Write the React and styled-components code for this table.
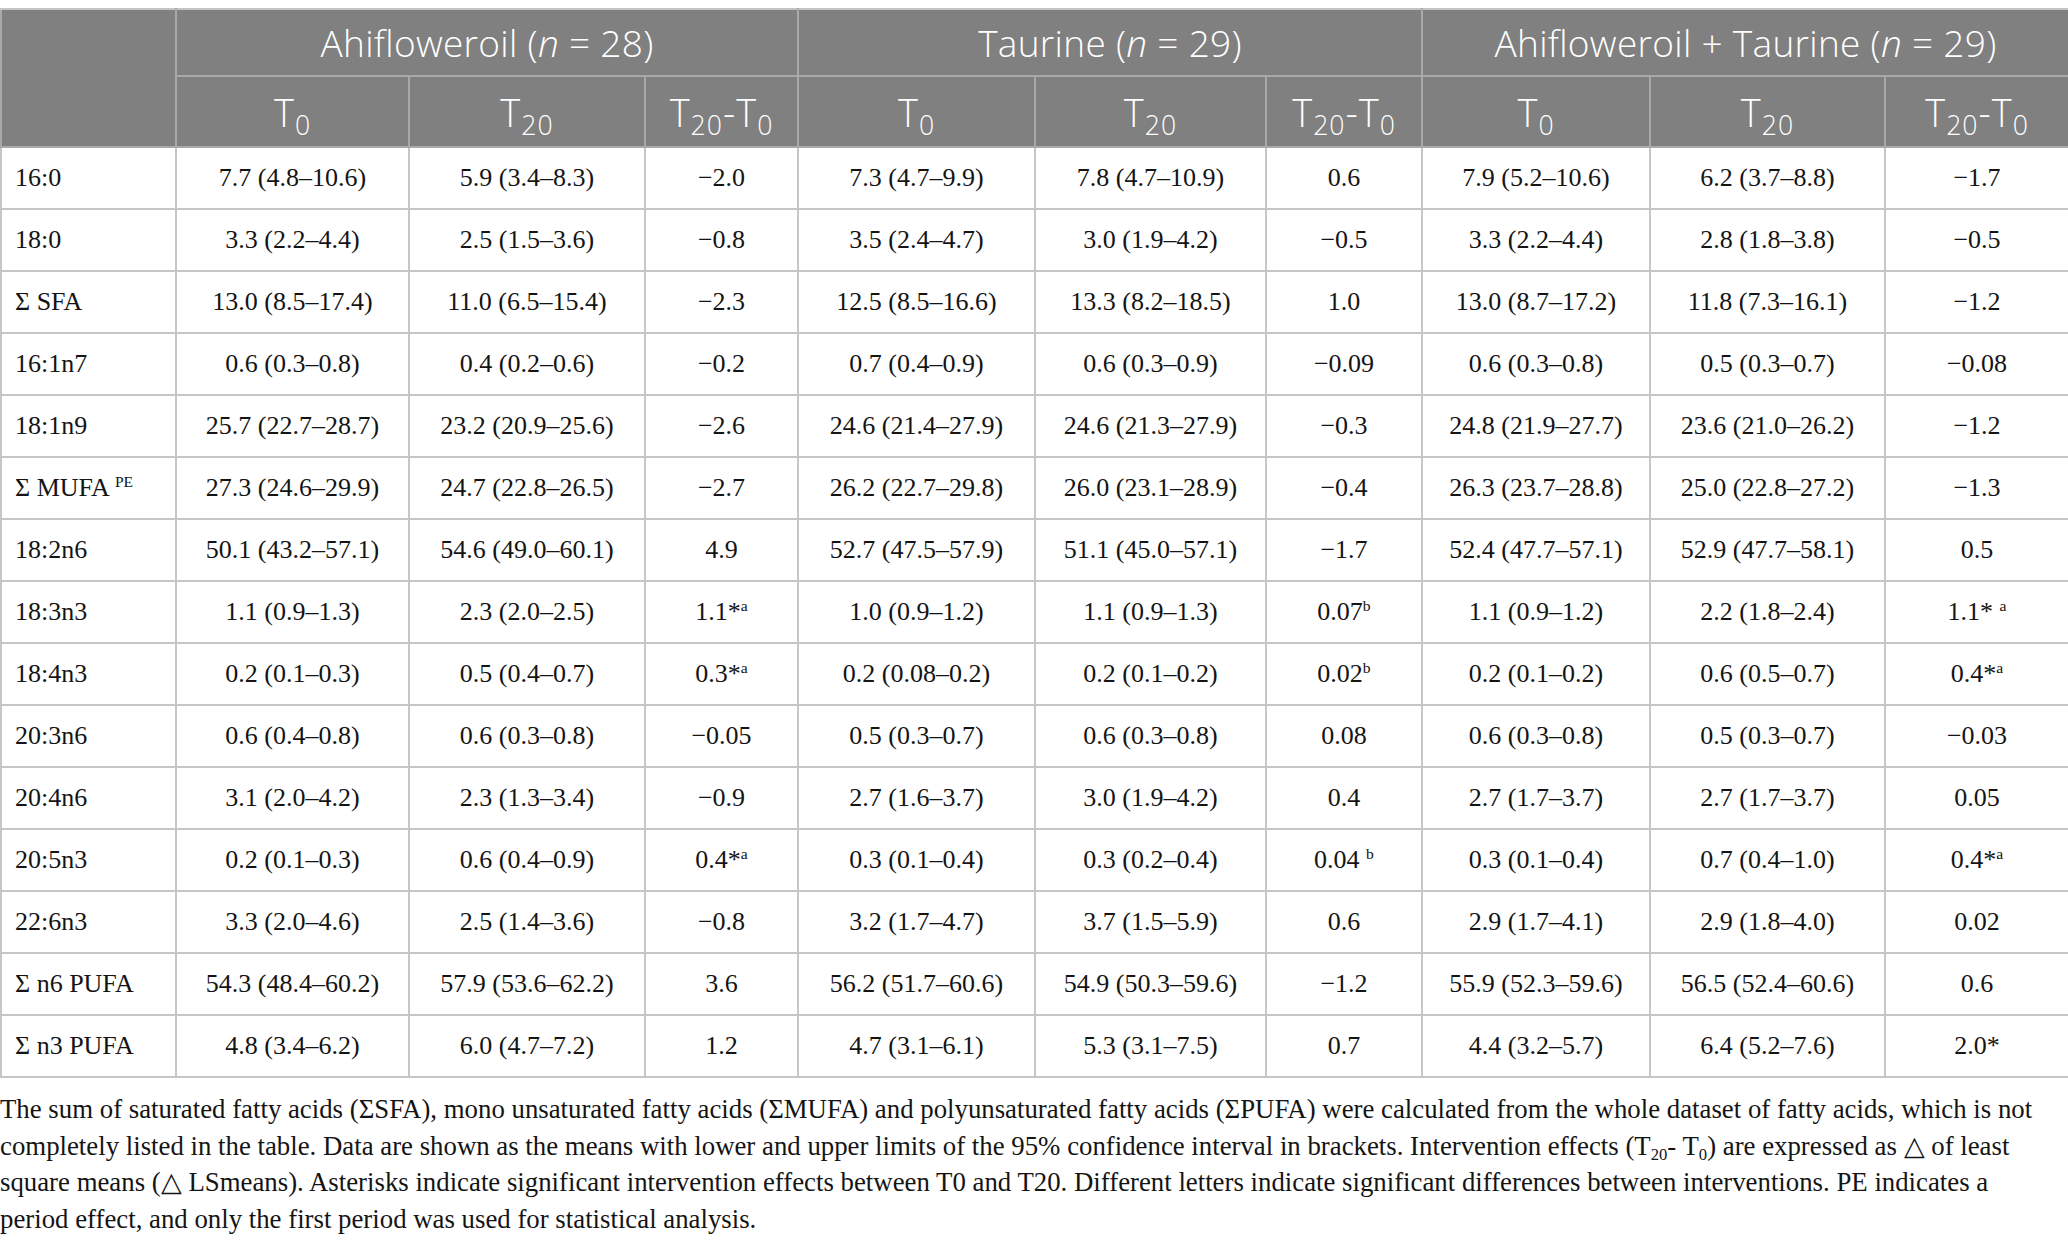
import React from 'react';
import styled, { createGlobalStyle } from 'styled-components';

const GlobalStyle = createGlobalStyle`
  body {
    margin: 0;
    background: #ffffff;
    font-family: "Liberation Serif", "Times New Roman", serif;
  }
`;

const Page = styled.div`
  width: 2068px;
  padding-top: 8px;
`;

const Table = styled.table`
  width: 2068px;
  border-collapse: collapse;
  table-layout: fixed;
`;

const HeadCell = styled.th`
  background: #808080;
  color: #ffffff;
  font-family: "Open Sans", "Noto Sans", sans-serif;
  font-weight: 300;
  font-size: ${(p) => (p.sub ? 38 : 37)}px;
  letter-spacing: ${(p) => (p.sub ? 1 : 0.3)}px;
  text-align: center;
  border: 2px solid #a9a9a9;
  border-top-color: #c4c4c4;
  height: ${(p) => p.h}px;
  padding: 0;
  vertical-align: middle;
  white-space: nowrap;
`;

const Cell = styled.td`
  border: 2px solid #c6c6c6;
  height: 60px;
  padding: 0 0 0 ${(p) => (p.label ? '13px' : '0')};
  text-align: ${(p) => (p.label ? 'left' : 'center')};
  font-size: 26px;
  color: #141414;
  white-space: nowrap;
  vertical-align: middle;
`;

const Sup = styled.sup`
  font-size: 0.6em;
  vertical-align: 0.6em;
  line-height: 0;
`;

const Sub = styled.sub`
  font-size: ${(p) => p.size || 0.62}em;
  vertical-align: -0.3em;
  line-height: 0;
`;

const Note = styled.div`
  margin-top: 13px;
  font-size: 26.8px;
  line-height: 36.5px;
  color: #141414;
`;

const NoteLine = styled.div`
  white-space: nowrap;
`;

const widths = [175, 233, 236, 153, 237, 231, 156, 228, 235, 184];

const groups = [
  ['Ahifloweroil', '28'],
  ['Taurine', '29'],
  ['Ahifloweroil + Taurine', '29'],
];

const rows = [
  ['16:0', '7.7 (4.8–10.6)', '5.9 (3.4–8.3)', '−2.0', '7.3 (4.7–9.9)', '7.8 (4.7–10.9)', '0.6', '7.9 (5.2–10.6)', '6.2 (3.7–8.8)', '−1.7'],
  ['18:0', '3.3 (2.2–4.4)', '2.5 (1.5–3.6)', '−0.8', '3.5 (2.4–4.7)', '3.0 (1.9–4.2)', '−0.5', '3.3 (2.2–4.4)', '2.8 (1.8–3.8)', '−0.5'],
  ['Σ SFA', '13.0 (8.5–17.4)', '11.0 (6.5–15.4)', '−2.3', '12.5 (8.5–16.6)', '13.3 (8.2–18.5)', '1.0', '13.0 (8.7–17.2)', '11.8 (7.3–16.1)', '−1.2'],
  ['16:1n7', '0.6 (0.3–0.8)', '0.4 (0.2–0.6)', '−0.2', '0.7 (0.4–0.9)', '0.6 (0.3–0.9)', '−0.09', '0.6 (0.3–0.8)', '0.5 (0.3–0.7)', '−0.08'],
  ['18:1n9', '25.7 (22.7–28.7)', '23.2 (20.9–25.6)', '−2.6', '24.6 (21.4–27.9)', '24.6 (21.3–27.9)', '−0.3', '24.8 (21.9–27.7)', '23.6 (21.0–26.2)', '−1.2'],
  ['Σ MUFA |PE', '27.3 (24.6–29.9)', '24.7 (22.8–26.5)', '−2.7', '26.2 (22.7–29.8)', '26.0 (23.1–28.9)', '−0.4', '26.3 (23.7–28.8)', '25.0 (22.8–27.2)', '−1.3'],
  ['18:2n6', '50.1 (43.2–57.1)', '54.6 (49.0–60.1)', '4.9', '52.7 (47.5–57.9)', '51.1 (45.0–57.1)', '−1.7', '52.4 (47.7–57.1)', '52.9 (47.7–58.1)', '0.5'],
  ['18:3n3', '1.1 (0.9–1.3)', '2.3 (2.0–2.5)', '1.1*|a', '1.0 (0.9–1.2)', '1.1 (0.9–1.3)', '0.07|b', '1.1 (0.9–1.2)', '2.2 (1.8–2.4)', '1.1* |a'],
  ['18:4n3', '0.2 (0.1–0.3)', '0.5 (0.4–0.7)', '0.3*|a', '0.2 (0.08–0.2)', '0.2 (0.1–0.2)', '0.02|b', '0.2 (0.1–0.2)', '0.6 (0.5–0.7)', '0.4*|a'],
  ['20:3n6', '0.6 (0.4–0.8)', '0.6 (0.3–0.8)', '−0.05', '0.5 (0.3–0.7)', '0.6 (0.3–0.8)', '0.08', '0.6 (0.3–0.8)', '0.5 (0.3–0.7)', '−0.03'],
  ['20:4n6', '3.1 (2.0–4.2)', '2.3 (1.3–3.4)', '−0.9', '2.7 (1.6–3.7)', '3.0 (1.9–4.2)', '0.4', '2.7 (1.7–3.7)', '2.7 (1.7–3.7)', '0.05'],
  ['20:5n3', '0.2 (0.1–0.3)', '0.6 (0.4–0.9)', '0.4*|a', '0.3 (0.1–0.4)', '0.3 (0.2–0.4)', '0.04 |b', '0.3 (0.1–0.4)', '0.7 (0.4–1.0)', '0.4*|a'],
  ['22:6n3', '3.3 (2.0–4.6)', '2.5 (1.4–3.6)', '−0.8', '3.2 (1.7–4.7)', '3.7 (1.5–5.9)', '0.6', '2.9 (1.7–4.1)', '2.9 (1.8–4.0)', '0.02'],
  ['Σ n6 PUFA', '54.3 (48.4–60.2)', '57.9 (53.6–62.2)', '3.6', '56.2 (51.7–60.6)', '54.9 (50.3–59.6)', '−1.2', '55.9 (52.3–59.6)', '56.5 (52.4–60.6)', '0.6'],
  ['Σ n3 PUFA', '4.8 (3.4–6.2)', '6.0 (4.7–7.2)', '1.2', '4.7 (3.1–6.1)', '5.3 (3.1–7.5)', '0.7', '4.4 (3.2–5.7)', '6.4 (5.2–7.6)', '2.0*'],
];

// "base|sup" -> base + superscript
const Value = ({ text }) => {
  const [base, sup] = text.split('|');
  return (
    <>
      {base}
      {sup && <Sup>{sup}</Sup>}
    </>
  );
};

const TimeHead = ({ kind }) => {
  if (kind === 0) return <>T<Sub size={0.7}>0</Sub></>;
  if (kind === 1) return <>T<Sub size={0.7}>20</Sub></>;
  return <>T<Sub size={0.7}>20</Sub>-T<Sub size={0.7}>0</Sub></>;
};

const App = () => {
  return (
    <Page>
      <GlobalStyle />
      <Table>
        <colgroup>
          {widths.map((w, i) => (
            <col key={i} style={{ width: w }} />
          ))}
        </colgroup>
        <thead>
          <tr>
            <HeadCell rowSpan={2} h={65} />
            {groups.map(([name, n]) => (
              <HeadCell key={name} colSpan={3} h={65}>
                {name} (<i>n</i> = {n})
              </HeadCell>
            ))}
          </tr>
          <tr>
            {groups.map(([name]) =>
              [0, 1, 2].map((k) => (
                <HeadCell key={name + k} h={69} sub>
                  <TimeHead kind={k} />
                </HeadCell>
              ))
            )}
          </tr>
        </thead>
        <tbody>
          {rows.map((r) => (
            <tr key={r[0]}>
              {r.map((c, i) => (
                <Cell key={i} label={i === 0}>
                  <Value text={c} />
                </Cell>
              ))}
            </tr>
          ))}
        </tbody>
      </Table>
      <Note>
        <NoteLine>
          The sum of saturated fatty acids (ΣSFA), mono unsaturated fatty acids (ΣMUFA) and polyunsaturated fatty acids (ΣPUFA) were calculated from the whole dataset of fatty acids, which is not
        </NoteLine>
        <NoteLine>
          completely listed in the table. Data are shown as the means with lower and upper limits of the 95% confidence interval in brackets. Intervention effects (T<Sub>20</Sub>- T<Sub>0</Sub>) are expressed as △ of least
        </NoteLine>
        <NoteLine>
          square means (△ LSmeans). Asterisks indicate significant intervention effects between T0 and T20. Different letters indicate significant differences between interventions. PE indicates a
        </NoteLine>
        <NoteLine>period effect, and only the first period was used for statistical analysis.</NoteLine>
      </Note>
    </Page>
  );
};

export default App;
